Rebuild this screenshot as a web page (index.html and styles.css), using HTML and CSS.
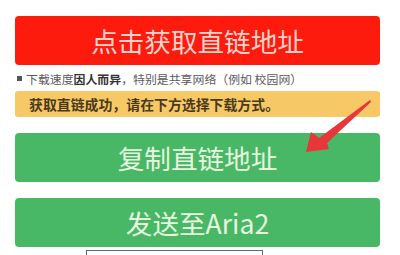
FILE: index.html
```html
<!DOCTYPE html>
<html lang="zh-CN">
<head>
<meta charset="utf-8">
<link rel="stylesheet" href="styles.css">
</head>
<body>
<div class="wrap">
  <div class="btn btn-red">点击获取直链地址</div>
  <p class="note"><span class="sq"></span>下载速度<b>因人而异</b>，特别是共享网络（例如 校园网）</p>
  <div class="alert">获取直链成功，请在下方选择下载方式。</div>
  <div class="btn btn-green">复制直链地址</div>
  <div class="btn btn-green">发送至Aria2</div>
  <div class="field-row"><div class="field"></div></div>
  <svg class="arrow" width="400" height="255" viewBox="0 0 400 255">
    <polygon points="306,152 311,132 319,138 370,100 371,102 327,143 329,149" fill="#e8363a"/>
  </svg>
</div>
</body>
</html>
```

FILE: styles.css
```css
html, body {
  margin: 0;
  padding: 0;
  background: #ffffff;
}
body {
  font-family: "Noto Sans CJK SC", "Noto Sans", sans-serif;
  width: 400px;
  height: 255px;
  overflow: hidden;
}
.wrap {
  position: relative;
  padding: 16px 20px 0 15px;
  display: flex;
  flex-direction: column;
}
.btn {
  height: 49px;
  border-radius: 4px;
  display: flex;
  align-items: center;
  justify-content: center;
  font-size: 26.6px;
  letter-spacing: 0;
  font-family: "Noto Sans CJK SC", "Open Sans", sans-serif;
}
.btn-red {
  background: #fd1b0e;
  color: #fbd3cb;
}
.btn-green {
  background: #48b866;
  color: #e6f6df;
}
.btn-green + .btn-green {
  margin-top: 16px;
}
.note {
  margin: 3px 0 0 2px;
  height: 20px;
  display: flex;
  align-items: center;
  font-size: 11.9px;
  color: #5a5a5a;
  white-space: nowrap;
}
.note b {
  color: #333333;
}
.sq {
  display: inline-block;
  width: 5px;
  height: 5px;
  background: #555555;
  margin-right: 4px;
}
.alert {
  margin-top: 3px;
  height: 26px;
  background: #f6c866;
  border-radius: 3px;
  display: flex;
  align-items: center;
  padding-left: 14px;
  font-size: 13.9px;
  font-weight: bold;
  color: #4a3a1c;
  margin-bottom: 16px;
}
.field-row {
  margin-top: 3px;
  padding-left: 71px;
}
.field {
  width: 175px;
  height: 4px;
  border: 1px solid #666666;
  border-bottom: none;
}
.arrow {
  position: absolute;
  left: 0;
  top: 0;
  pointer-events: none;
}
```
